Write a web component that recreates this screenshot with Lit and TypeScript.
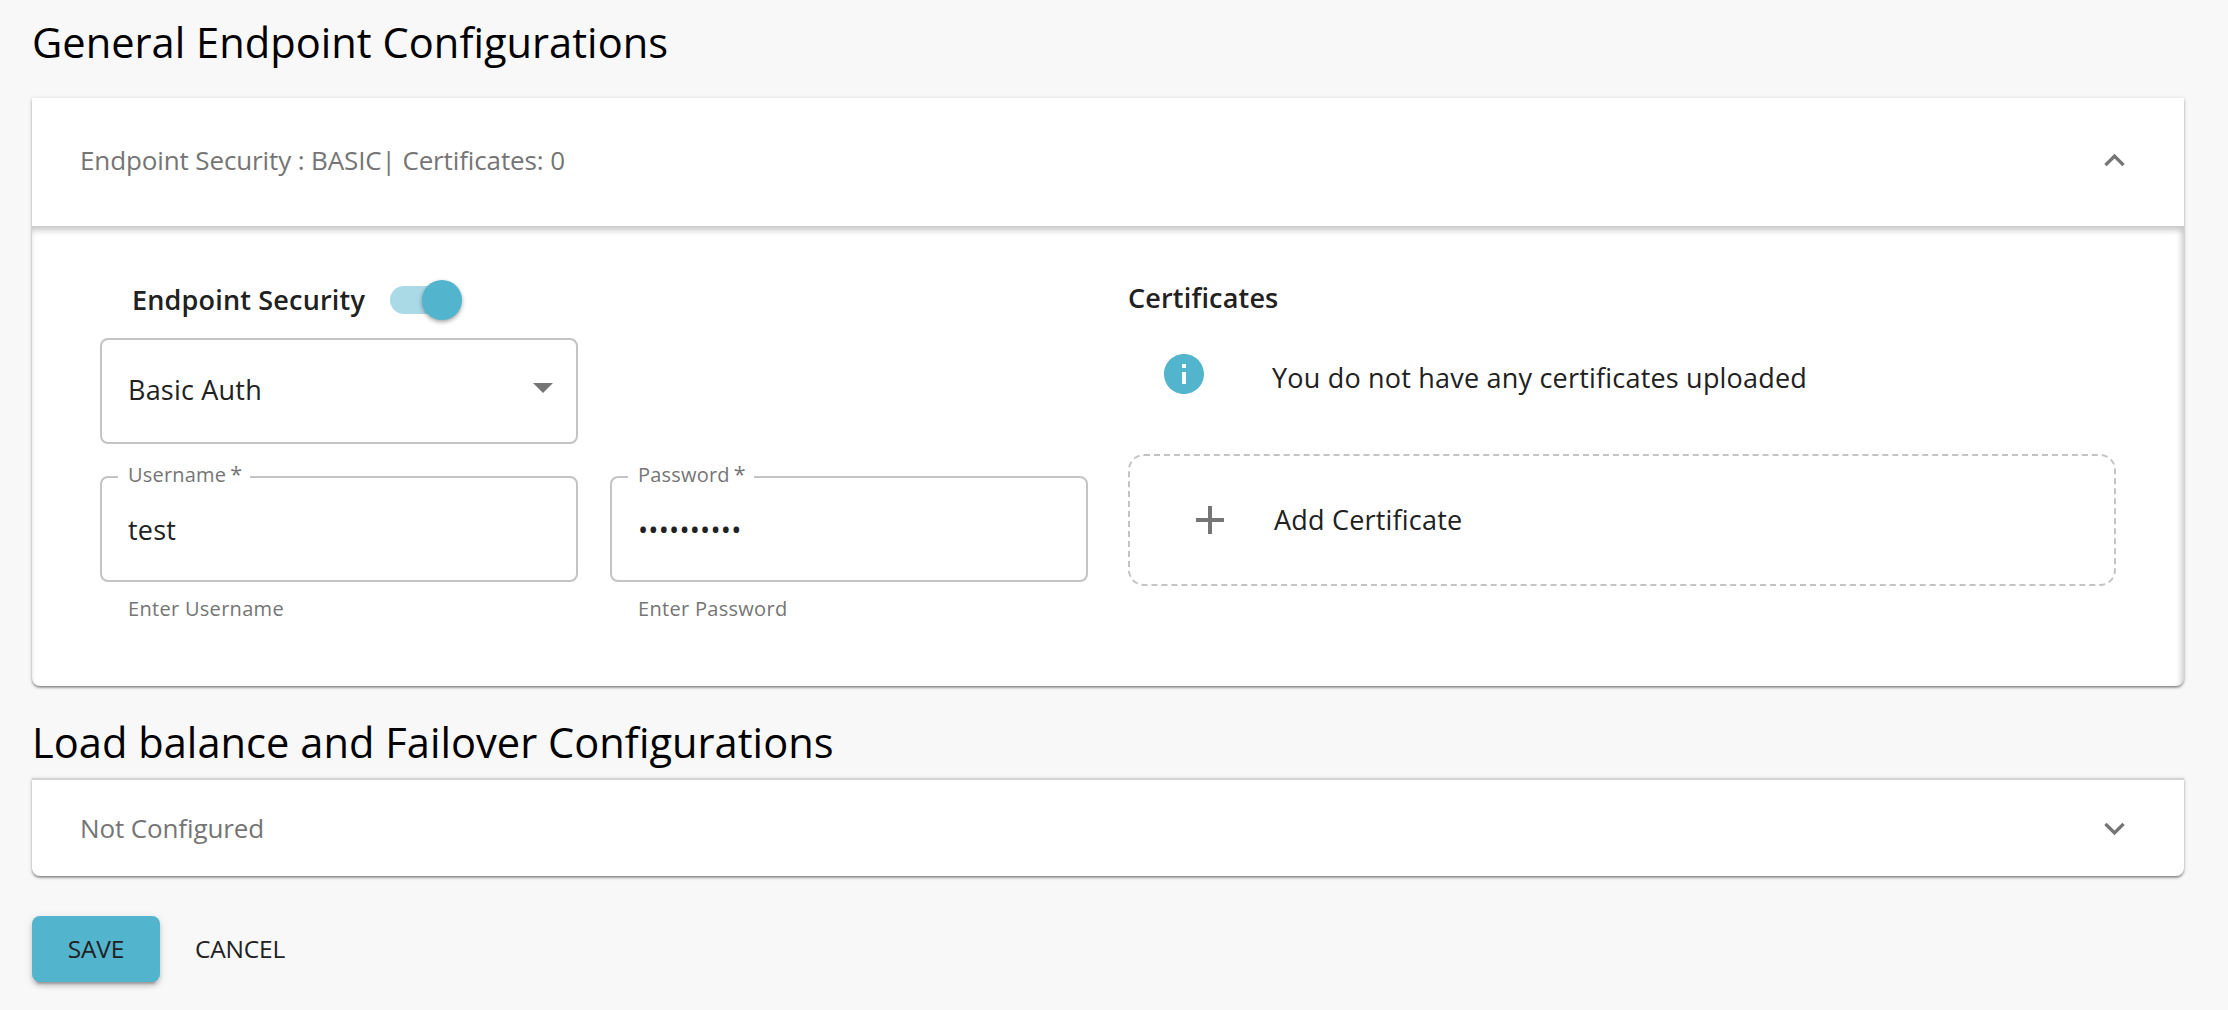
import { LitElement, html, css, svg } from "lit";
import { customElement, property } from "lit/decorators.js";

const iconPaths: Record<string, string> = {
  up: "M12 8l-6 6 1.41 1.41L12 10.83l4.59 4.58L18 14z",
  down: "M16.59 8.59L12 13.17 7.41 8.59 6 10l6 6 6-6z",
  drop: "M7 10l5 5 5-5z",
  info: "M12 2C6.48 2 2 6.48 2 12s4.48 10 10 10 10-4.48 10-10S17.52 2 12 2zm1 15h-2v-6h2v6zm0-8h-2V7h2v2z",
  add: "M19 13h-6v6h-2v-6H5v-2h6V5h2v6h6v2z",
};

@customElement("ui-icon")
class UiIcon extends LitElement {
  @property() name = "";
  static styles = css`
    :host { display: block; flex: none; width: 48px; height: 48px; color: #757575; }
    svg { display: block; width: 100%; height: 100%; fill: currentColor; }
  `;
  render() {
    return html`<svg viewBox="0 0 24 24">${svg`<path d=${iconPaths[this.name] ?? ""}></path>`}</svg>`;
  }
}

@customElement("outlined-field")
class OutlinedField extends LitElement {
  @property() label = "";
  @property() value = "";
  @property() helper = "";
  @property({ type: Boolean }) masked = false;
  static styles = css`
    :host { display: block; width: 478px; font-family: "Open Sans", sans-serif; }
    .box {
      box-sizing: border-box; height: 113px; margin: 0; min-width: 0;
      border: 2px solid #c4c4c4; border-radius: 8px; padding: 0 26px 0 16px;
    }
    .legend {
      padding: 0 8px 0 10px; height: 16px; line-height: 11px;
      font-size: 20px; letter-spacing: 0.2px; color: #757575; white-space: nowrap;
    }
    .star { margin-left: 4px; font-size: 21.5px; line-height: 1px; letter-spacing: 0; }
    .value { padding-left: 10px; line-height: 38px; margin-top: 26px; font-size: 27px; letter-spacing: 0.2px; color: #212121; }
    .helper { margin: 13px 28px 0; font-size: 20px; line-height: 28px; letter-spacing: 0.3px; color: #757575; }
  `;
  render() {
    return html`
      <fieldset class="box">
        <legend class="legend">${this.label}<span class="star">*</span></legend>
        <div class="value">${this.masked ? "•".repeat(this.value.length) : this.value}</div>
      </fieldset>
      <div class="helper">${this.helper}</div>
    `;
  }
}

@customElement("app-root")
class AppRoot extends LitElement {
  static styles = css`
    :host {
      display: block; box-sizing: border-box; height: 1010px; padding: 0 44px 0 32px;
      background: #f8f8f8; color: #212121; font-family: "Open Sans", sans-serif;
      font-size: 27px; line-height: 40px; letter-spacing: 0.2px;
    }
    .title { margin: 0; padding-top: 13px; height: 85px; font-size: 41.6px; line-height: 58px; font-weight: 400; letter-spacing: 0.03px; color: #000; }
    .title.second { padding-top: 27px; height: 65px; }
    .card {
      box-sizing: border-box; background: #fff; border-radius: 0 0 8px 8px;
      box-shadow: 0 2px 2px rgba(0,0,0,.25), 0 1px 4px rgba(0,0,0,.2), 0 2px 1px -1px rgba(0,0,0,.12);
    }
    .summary { box-sizing: border-box; display: flex; align-items: center; justify-content: space-between; padding: 0 49px 0 48px; color: #757575; font-size: 26px; letter-spacing: -0.12px; }
    .summary ui-icon { width: 41px; height: 41px; }
    .tall { height: 128px; padding-bottom: 4px; }
    .short { height: 96px; }
    .short ui-icon { margin-top: 1px; }
    .closed { border-top: 2px solid #d3d3d3; height: 98px; }
    .details {
      box-sizing: border-box; height: 460px; display: flex; gap: 40px; padding: 52px 68px;
      border-radius: 0 0 8px 8px; box-shadow: inset -2px 4px 6px #c4c4c4;
    }
    .security { width: 988px; }
    .toggle-row { display: flex; align-items: center; height: 44px; padding-left: 32px; gap: 25px; margin-bottom: 16px; }
    .strong { font-weight: 600; letter-spacing: 0.18px; }
    .track { width: 68px; height: 28px; border-radius: 14px; background: #a9dae6; display: flex; align-items: center; justify-content: flex-end; }
    .thumb { flex: none; width: 40px; height: 40px; margin-right: -4px; border-radius: 50%; background: #53b4cd; box-shadow: 0 2px 4px rgba(0,0,0,.35); }
    .select { box-sizing: border-box; width: 478px; height: 106px; border: 2px solid #c4c4c4; border-radius: 8px; display: flex; align-items: center; justify-content: space-between; padding: 0 9px 2px 26px; }
    .select ui-icon { margin-top: -6px; }
    .fields { display: flex; gap: 32px; margin-top: 25px; }
    .certs { flex: 1; }
    .certs-title { height: 40px; }
    .empty { display: flex; align-items: center; gap: 64px; padding: 32px 32px 0; height: 48px; }
    .empty ui-icon { color: #53b4cd; }
    .empty-text { padding-top: 8px; }
    .add { box-sizing: border-box; height: 132px; margin-top: 56px; border: 2px dashed #c4c4c4; border-radius: 16px; display: flex; align-items: center; gap: 40px; padding-left: 56px; }
    .actions { display: flex; align-items: center; margin-top: 40px; font-size: 24.5px; letter-spacing: -0.2px; }
    .save { box-sizing: border-box; width: 128px; height: 66px; border-radius: 8px; background: #53b4cd; display: flex; align-items: center; justify-content: center; box-shadow: 0 6px 2px -4px rgba(0,0,0,.2), 0 4px 4px rgba(0,0,0,.14), 0 2px 10px rgba(0,0,0,.12); }
    .cancel { padding-left: 35px; }
  `;
  render() {
    return html`
      <h2 class="title">General Endpoint Configurations</h2>
      <section class="card">
        <div class="summary tall"><span>Endpoint Security : BASIC| Certificates: 0</span><ui-icon name="up"></ui-icon></div>
        <div class="details">
          <div class="security">
            <div class="toggle-row"><span class="strong">Endpoint Security</span><div class="track"><div class="thumb"></div></div></div>
            <div class="select"><span>Basic Auth</span><ui-icon name="drop"></ui-icon></div>
            <div class="fields">
              <outlined-field label="Username" value="test" helper="Enter Username"></outlined-field>
              <outlined-field label="Password" value="••••••••••" helper="Enter Password" masked></outlined-field>
            </div>
          </div>
          <div class="certs">
            <div class="certs-title strong">Certificates</div>
            <div class="empty"><ui-icon name="info"></ui-icon><span class="empty-text">You do not have any certificates uploaded</span></div>
            <div class="add"><ui-icon name="add"></ui-icon><span>Add Certificate</span></div>
          </div>
        </div>
      </section>
      <h2 class="title second">Load balance and Failover Configurations</h2>
      <section class="card closed">
        <div class="summary short"><span>Not Configured</span><ui-icon name="down"></ui-icon></div>
      </section>
      <div class="actions"><div class="save">SAVE</div><div class="cancel">CANCEL</div></div>
    `;
  }
}
